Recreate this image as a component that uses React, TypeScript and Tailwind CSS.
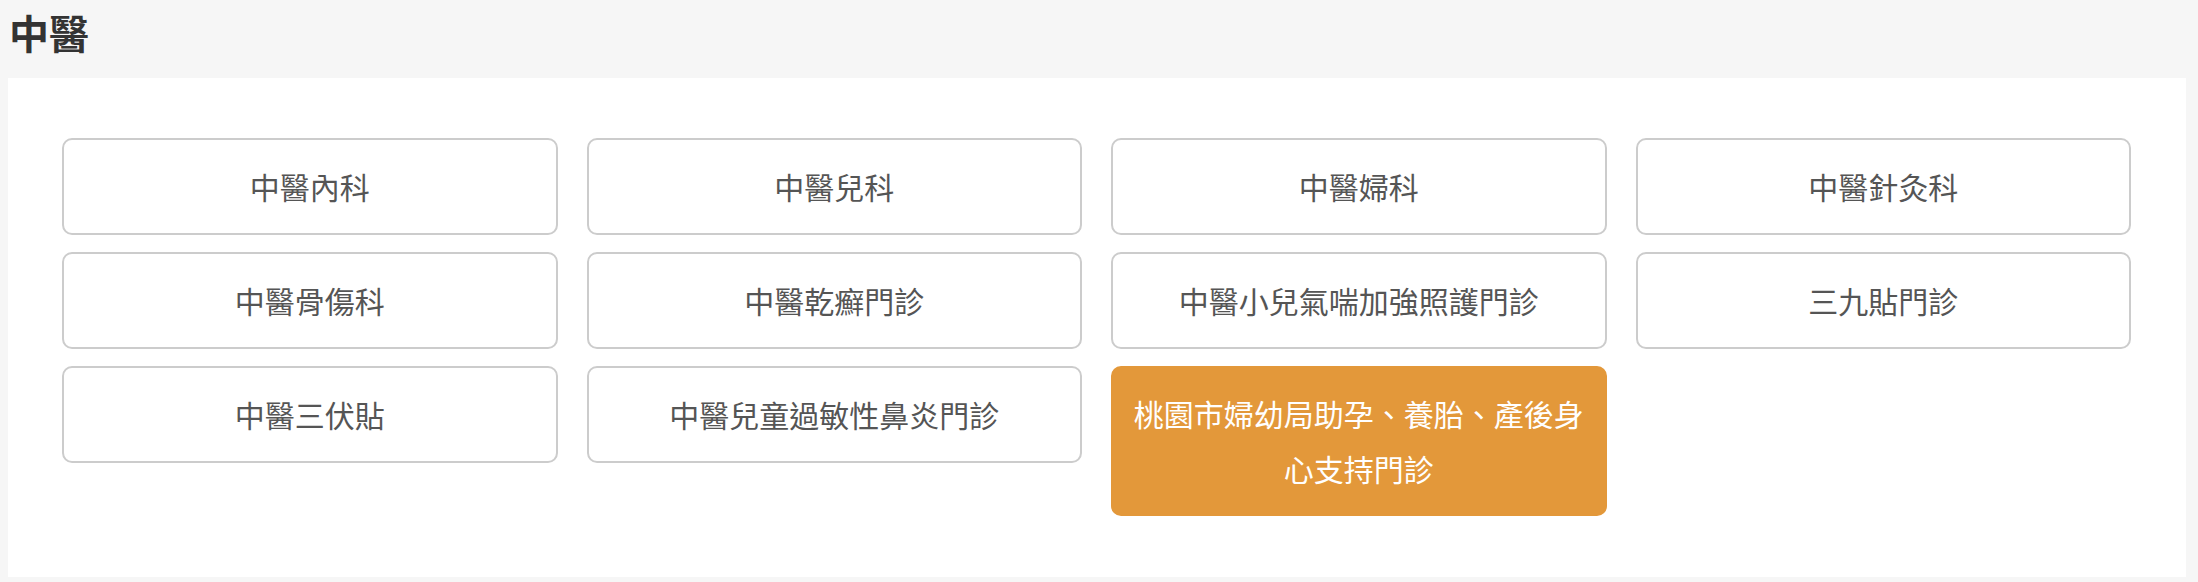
import React from "react";

const items: { label: string; active?: boolean }[] = [
  { label: "中醫內科" },
  { label: "中醫兒科" },
  { label: "中醫婦科" },
  { label: "中醫針灸科" },
  { label: "中醫骨傷科" },
  { label: "中醫乾癬門診" },
  { label: "中醫小兒氣喘加強照護門診" },
  { label: "三九貼門診" },
  { label: "中醫三伏貼" },
  { label: "中醫兒童過敏性鼻炎門診" },
  { label: "桃園市婦幼局助孕、養胎、產後身心支持門診", active: true },
];

export default function App() {
  return (
    <div
      className="w-[2198px] h-[582px] bg-[#f6f6f6] overflow-hidden"
      style={{ fontFamily: '"Noto Sans CJK TC", "Noto Sans", sans-serif' }}
    >
      <div className="h-[78px] pl-[9px] pt-[4px]">
        <h2 className="text-[40px] leading-[56px] font-bold text-[#333]">中醫</h2>
      </div>
      <div className="ml-[8px] mr-[12px] h-[499px] bg-white pl-[54px] pr-[55px] pt-[60px]">
        <div className="grid grid-cols-4 gap-x-[29px] gap-y-[17px] items-start">
          {items.map((it) => (
            <div
              key={it.label}
              className={
                it.active
                  ? "rounded-[10px] border-2 border-[#e3983a] bg-[#e3983a] px-[20px] py-[18px] text-center text-[30px] leading-[55px] text-white"
                  : "rounded-[10px] border-2 border-[#cccccc] bg-white px-[20px] py-[19px] text-center text-[30px] leading-[55px] text-[#555]"
              }
            >
              {it.label}
            </div>
          ))}
        </div>
      </div>
    </div>
  );
}
